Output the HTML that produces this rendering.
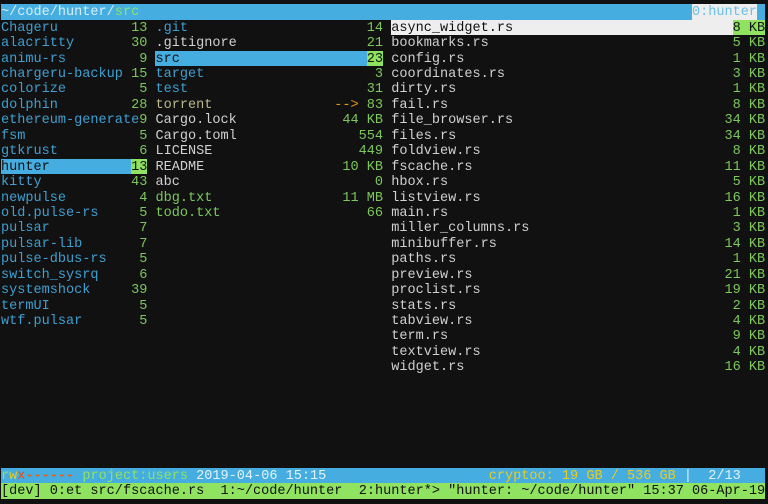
<!DOCTYPE html>
<html><head><meta charset="utf-8">
<style>
html,body{margin:0;padding:0;width:768px;height:504px;overflow:hidden;background:#111111}
body{position:relative;font-family:"Liberation Mono",monospace;font-size:13.55px;color:#d0d0d0}
.wrap{position:absolute;left:1px;top:4.3px;width:94ch;height:496px;filter:blur(0.3px)}
.c{position:absolute;top:15.45px}
.c p{margin:0;height:15.45px;line-height:18px;white-space:pre;position:relative}
.c p s{text-decoration:none;position:absolute;right:0;top:0;height:15.45px;line-height:18px;color:#7cc85a}
.l{left:0;width:18ch;color:#3f9fd0}
.m{left:19ch;width:28ch}
.r{left:48ch;width:46ch;color:#d0d0d0}
.b{color:#3f9fd0}
.g{color:#7cc85a}
.t{color:#b9b98c}
.sel{background:#45ade0;color:#111}
.c p.sel s{background:#8fe360;color:#111}
.wsel{background:#eeeeee;color:#111}
.c p.wsel s{background:#8fe360;color:#111}
.bar{position:absolute;left:0;width:94ch;height:15.45px;line-height:18px;white-space:pre}
.bar span{position:absolute;top:0;height:15.45px}
i{font-style:normal}
</style></head><body>
<div class="wrap">
<div class="bar" style="top:0;background:#45ade0;color:#dff1fa"><span style="left:0;color:#d6eefa">~/code/hunter/<i style="color:#8fe360">src</i></span><span style="left:85ch;background:#eeeeee;color:#6cc0ea">0:hunter</span></div>
<div class="c l">
<p>Chageru<s>13</s></p>
<p>alacritty<s>30</s></p>
<p>animu-rs<s>9</s></p>
<p>chargeru-backup<s>15</s></p>
<p>colorize<s>5</s></p>
<p>dolphin<s>28</s></p>
<p>ethereum-generate<s>9</s></p>
<p>fsm<s>5</s></p>
<p>gtkrust<s>6</s></p>
<p class="sel">hunter<s>13</s></p>
<p>kitty<s>43</s></p>
<p>newpulse<s>4</s></p>
<p>old.pulse-rs<s>5</s></p>
<p>pulsar<s>7</s></p>
<p>pulsar-lib<s>7</s></p>
<p>pulse-dbus-rs<s>5</s></p>
<p>switch_sysrq<s>6</s></p>
<p>systemshock<s>39</s></p>
<p>termUI<s>5</s></p>
<p>wtf.pulsar<s>5</s></p>
</div>
<div class="c m">
<p class="b">.git<s>14</s></p>
<p>.gitignore<s>21</s></p>
<p class="sel">src<s>23</s></p>
<p class="b">target<s>3</s></p>
<p class="b">test<s>31</s></p>
<p class="t">torrent<s><i style="color:#e8950e">--&gt;</i> 83</s></p>
<p>Cargo.lock<s>44 KB</s></p>
<p>Cargo.toml<s>554</s></p>
<p>LICENSE<s>449</s></p>
<p>README<s>10 KB</s></p>
<p>abc<s>0</s></p>
<p class="g">dbg.txt<s>11 MB</s></p>
<p class="g">todo.txt<s>66</s></p>
</div>
<div class="c r">
<p class="wsel">async_widget.rs<s>8 KB</s></p>
<p>bookmarks.rs<s>5 KB</s></p>
<p>config.rs<s>1 KB</s></p>
<p>coordinates.rs<s>3 KB</s></p>
<p>dirty.rs<s>1 KB</s></p>
<p>fail.rs<s>8 KB</s></p>
<p>file_browser.rs<s>34 KB</s></p>
<p>files.rs<s>34 KB</s></p>
<p>foldview.rs<s>8 KB</s></p>
<p>fscache.rs<s>11 KB</s></p>
<p>hbox.rs<s>5 KB</s></p>
<p>listview.rs<s>16 KB</s></p>
<p>main.rs<s>1 KB</s></p>
<p>miller_columns.rs<s>3 KB</s></p>
<p>minibuffer.rs<s>14 KB</s></p>
<p>paths.rs<s>1 KB</s></p>
<p>preview.rs<s>21 KB</s></p>
<p>proclist.rs<s>19 KB</s></p>
<p>stats.rs<s>2 KB</s></p>
<p>tabview.rs<s>4 KB</s></p>
<p>term.rs<s>9 KB</s></p>
<p>textview.rs<s>4 KB</s></p>
<p>widget.rs<s>16 KB</s></p>
</div>
<div class="bar" style="top:463.6px;background:#45ade0;color:#e4f3fb"><span style="left:0"><i style="color:#8fe360">r</i><i style="color:#e8cc20">w</i><i style="color:#f04a10">x</i><i style="color:#f45a10;-webkit-text-stroke:0.4px #f45a10">------</i> <i style="color:#8fe360">project:users</i> 2019-04-06 15:15</span><span style="left:60ch;color:#e8cc20">cryptoo: 19 GB / 536 GB <i style="color:#e4f3fb">|</i></span><span style="left:87ch">2/13</span></div>
<div class="bar" style="top:479.1px;background:#8fe360;color:#111">[dev] 0:et src/fscache.rs  1:~/code/hunter  2:hunter*&gt; "hunter: ~/code/hunter" 15:37 06-Apr-19</div>
</div>
</body></html>
